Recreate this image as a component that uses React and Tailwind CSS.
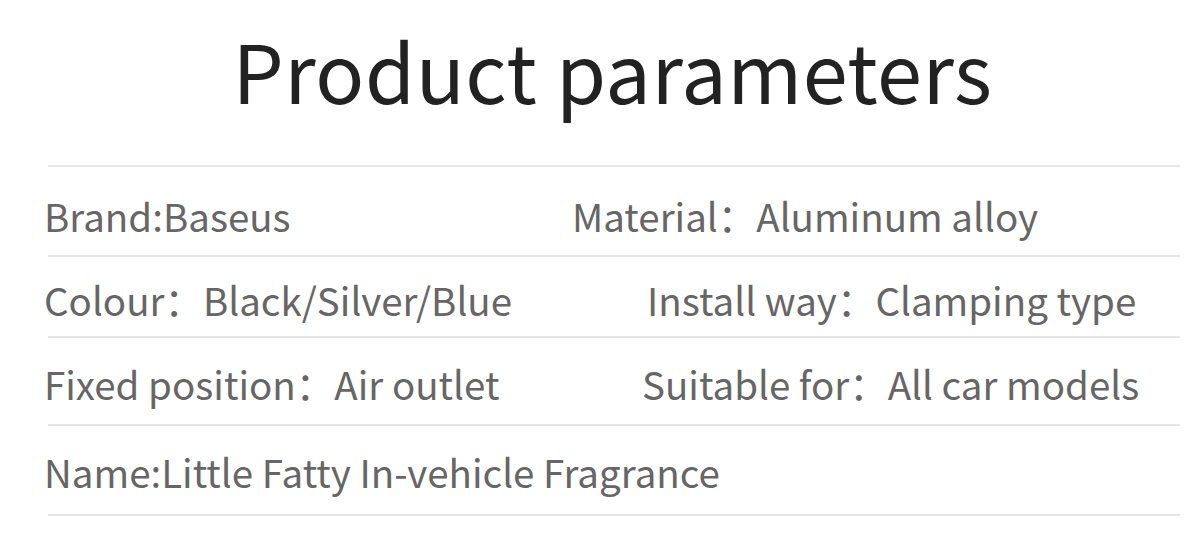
const rows = [
  { left: 'Brand:Baseus', right: 'Material：Aluminum alloy', rightPad: 'pl-[524px]', h: 'h-[90px] pt-[8px]' },
  { left: 'Colour：Black/Silver/Blue', right: 'Install way：Clamping type', rightPad: 'pl-[599px]', h: 'h-[81px] pt-[6px]' },
  { left: 'Fixed position：Air outlet', right: 'Suitable for：All car models', rightPad: 'pl-[594px]', h: 'h-[88px] pt-[4px]' },
  { left: 'Name:Little Fatty In-vehicle Fragrance', right: '', rightPad: '', h: 'h-[90px] pt-[2px]' },
];

export default function App() {
  return (
    <div
      className="w-[1195px] h-[559px] bg-white overflow-hidden"
      style={{ fontFamily: '"Noto Sans CJK SC", "Noto Sans", sans-serif' }}
    >
      <div className="h-[165px] flex justify-center pt-[28px] pl-[30px]">
        <h1 className="text-[81px] leading-none text-[#222] tracking-[0.5px]">Product parameters</h1>
      </div>
      <div className="ml-[48px] w-[1132px] border-t-2 border-[#e6e6e6]">
        {rows.map((r) => (
          <div key={r.left} className={`relative flex items-center border-b-2 border-[#e6e6e6] ${r.h}`}>
            <span className="-ml-[4px] text-[38.5px] text-[#666] leading-none">{r.left}</span>
            {r.right && (
              <span className={`absolute left-0 text-[38.5px] text-[#666] leading-none ${r.rightPad}`}>
                {r.right}
              </span>
            )}
          </div>
        ))}
      </div>
    </div>
  );
}
